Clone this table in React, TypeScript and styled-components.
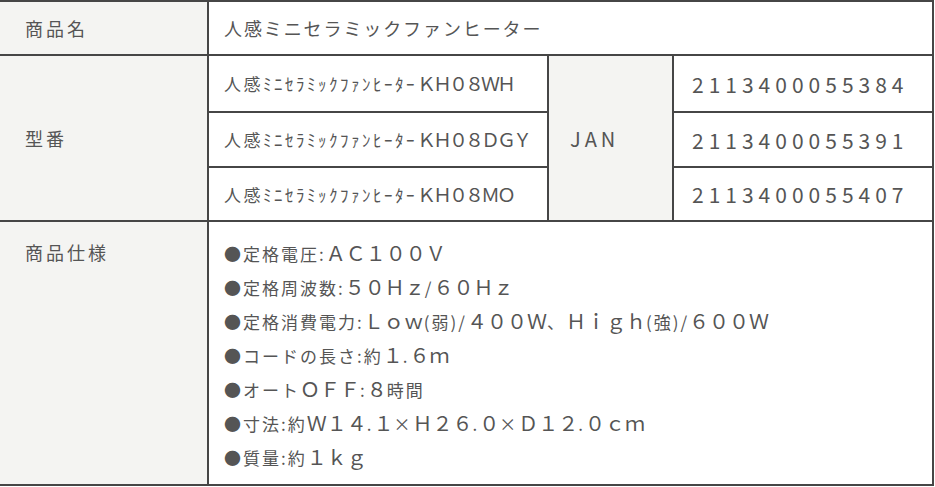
import React from "react";
import styled, { createGlobalStyle } from "styled-components";

const Global = createGlobalStyle`
  html, body { margin: 0; padding: 0; background: #ffffff; }
  body {
    font-family: "Noto Sans CJK JP", "Noto Sans", sans-serif;
    color: #555555;
    -webkit-font-smoothing: antialiased;
  }
`;

const Table = styled.div`
  display: grid;
  width: max-content;
  grid-template-columns: 207px 338px 123px 258px;
  grid-template-rows: 52px 55px 53px 52px 262px;
  grid-template-areas:
    "l1 v1 v1 v1"
    "l2 m1 jan n1"
    "l2 m2 jan n2"
    "l2 m3 jan n3"
    "l3 s s s";
  gap: 2px;
  padding: 2px 2px 2px 0;
  background: #464646;
`;

const Cell = styled.div<{ $area: string; $shade?: boolean; $top?: boolean; $pad: number }>`
  grid-area: ${(p) => p.$area};
  background: ${(p) => (p.$shade ? "#f4f4f2" : "#ffffff")};
  display: flex;
  align-items: ${(p) => (p.$top ? "flex-start" : "center")};
  padding: ${(p) => (p.$top ? "14px" : "0")} 0 0 ${(p) => p.$pad}px;
  min-width: 0;
`;

const Label = styled.span`
  font-size: 18px;
  letter-spacing: 3px;
  line-height: 33px;
  white-space: nowrap;
`;

const Title = styled.span`
  font-size: 18px;
  letter-spacing: 1.9px;
  white-space: nowrap;
`;

const Model = styled.span`
  font-size: 17px;
  letter-spacing: 2.5px;
  line-height: 24px;
  white-space: nowrap;
`;

const Code = styled.span`
  font-size: 21px;
  letter-spacing: 5px;
  white-space: nowrap;
`;

const Jan = styled.span`
  font-size: 20px;
  letter-spacing: 4px;
`;

const SpecList = styled.ul`
  list-style: none;
  margin: 0;
  padding: 0;
`;

const SpecItem = styled.li`
  font-size: 17px;
  letter-spacing: 2px;
  line-height: 33px;
  white-space: nowrap;
`;

const Wide = styled.span<{ $size: number; $ls: number }>`
  font-size: ${(p) => p.$size}px;
  font-feature-settings: "fwid" 1;
  letter-spacing: ${(p) => p.$ls}px;
`;

function widen(text: string, size: number, ls: number) {
  return text.split(/([A-Za-z0-9]+)/).map((part, i) =>
    i % 2 === 1 ? (
      <Wide key={i} $size={size} $ls={ls}>
        {part}
      </Wide>
    ) : (
      <React.Fragment key={i}>{part}</React.Fragment>
    )
  );
}

const models = [
  { area: "m1", num: "n1", name: "人感ﾐﾆｾﾗﾐｯｸﾌｧﾝﾋｰﾀｰKH08WH", code: "2113400055384" },
  { area: "m2", num: "n2", name: "人感ﾐﾆｾﾗﾐｯｸﾌｧﾝﾋｰﾀｰKH08DGY", code: "2113400055391" },
  { area: "m3", num: "n3", name: "人感ﾐﾆｾﾗﾐｯｸﾌｧﾝﾋｰﾀｰKH08MO", code: "2113400055407" },
];

const specs = [
  "●定格電圧:AC100V",
  "●定格周波数:50Hz/60Hz",
  "●定格消費電力:Low(弱)/400W、High(強)/600W",
  "●コードの長さ:約1.6m",
  "●オートOFF:8時間",
  "●寸法:約W14.1×H26.0×D12.0cm",
  "●質量:約1kg",
];

export default function App() {
  return (
    <>
      <Global />
      <Table>
        <Cell $area="l1" $shade $pad={25}>
          <Label>商品名</Label>
        </Cell>
        <Cell $area="v1" $pad={15}>
          <Title>人感ミニセラミックファンヒーター</Title>
        </Cell>

        <Cell $area="l2" $shade $pad={25}>
          <Label>型番</Label>
        </Cell>
        {models.map((m) => (
          <React.Fragment key={m.area}>
            <Cell $area={m.area} $pad={15}>
              <Model>{widen(m.name, 19, -3)}</Model>
            </Cell>
            <Cell $area={m.num} $pad={18}>
              <Code>{m.code}</Code>
            </Cell>
          </React.Fragment>
        ))}
        <Cell $area="jan" $shade $pad={21}>
          <Jan>JAN</Jan>
        </Cell>

        <Cell $area="l3" $shade $top $pad={25}>
          <Label>商品仕様</Label>
        </Cell>
        <Cell $area="s" $top $pad={15}>
          <SpecList>
            {specs.map((s) => (
              <SpecItem key={s}>{widen(s, 20, 0)}</SpecItem>
            ))}
          </SpecList>
        </Cell>
      </Table>
    </>
  );
}
